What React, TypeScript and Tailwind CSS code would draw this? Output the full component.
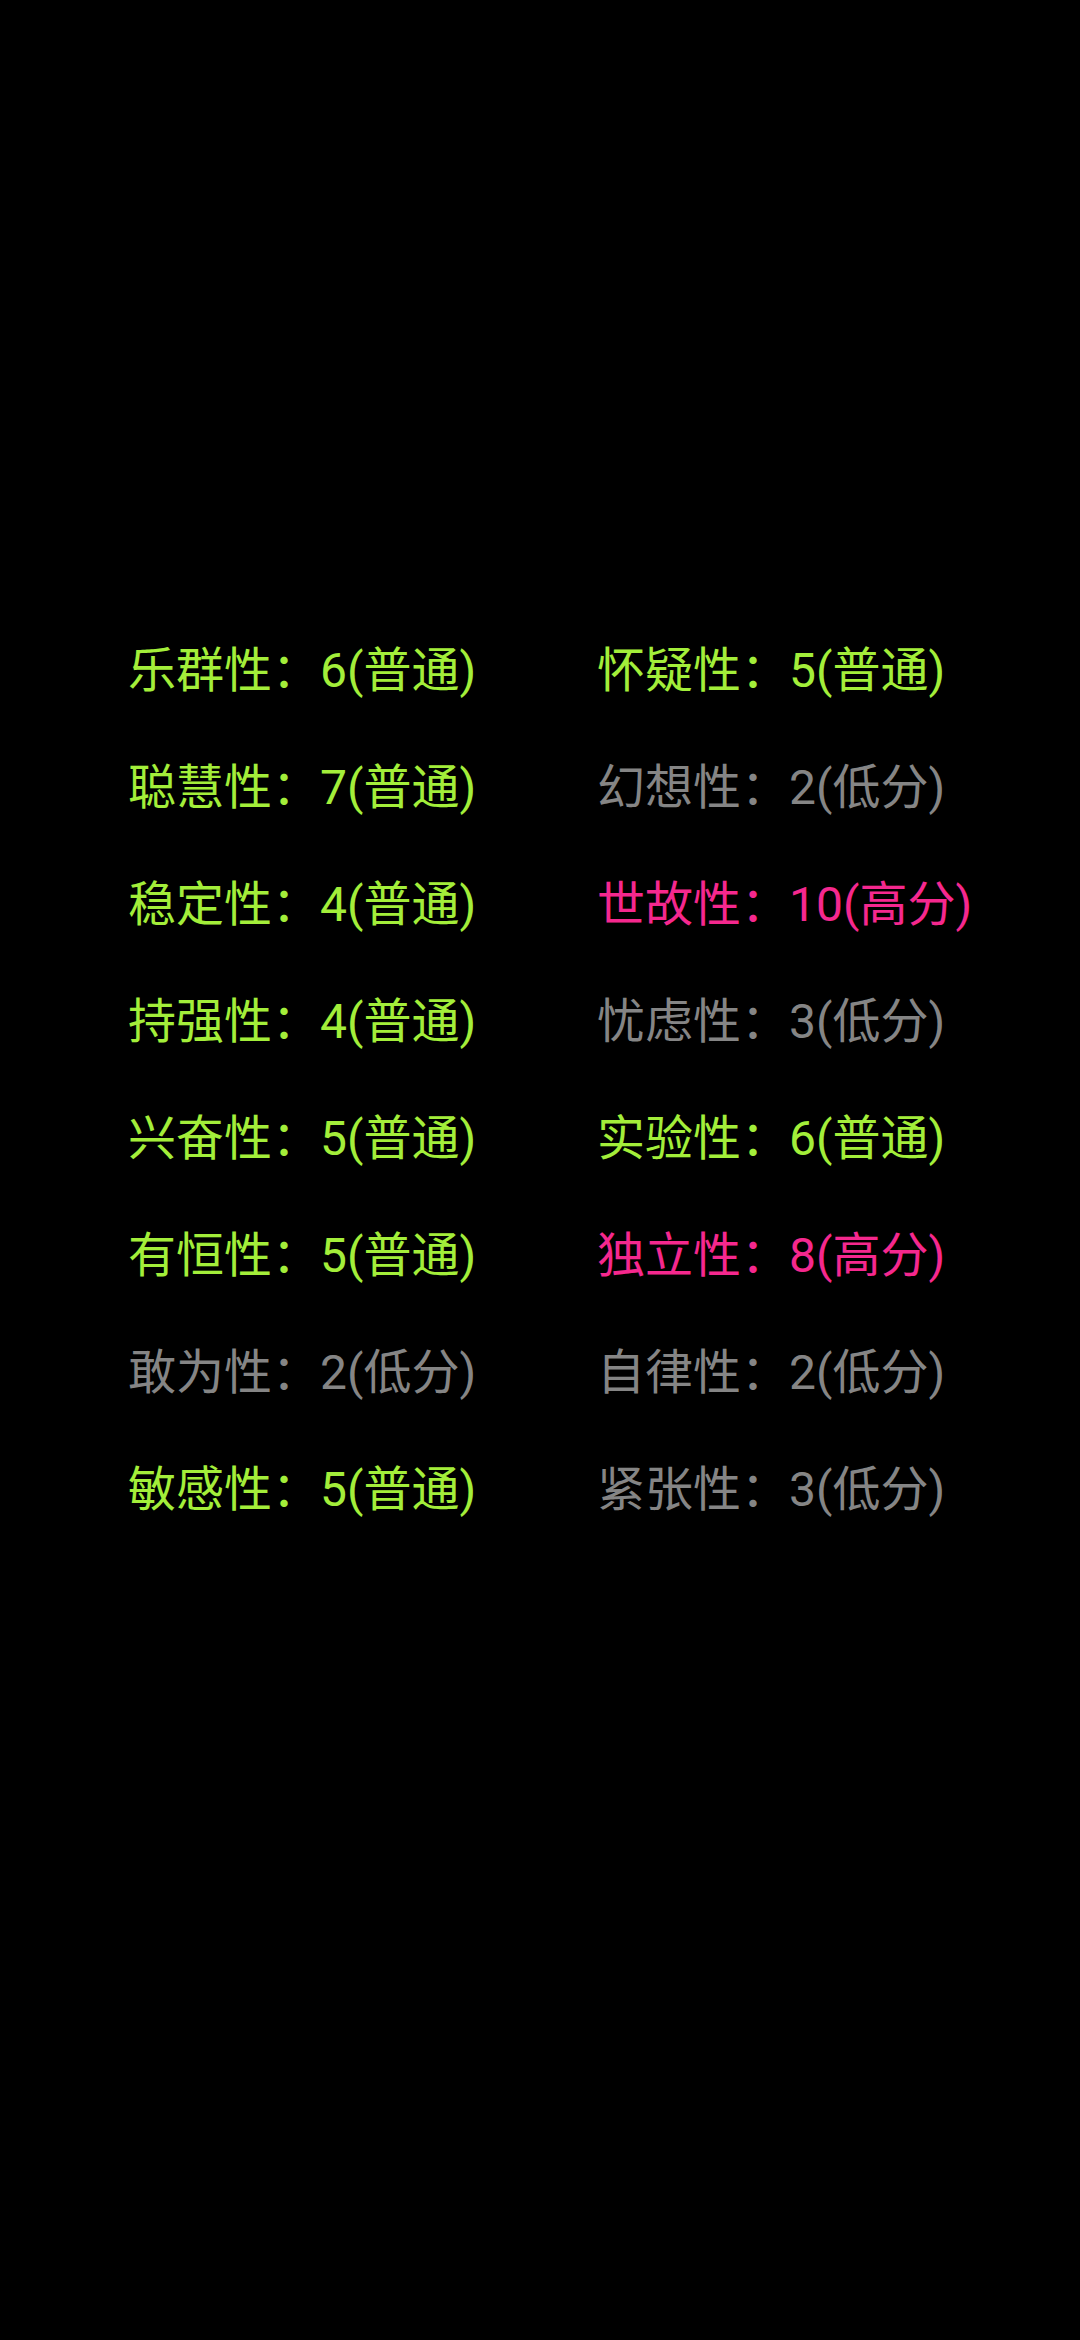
import React from "react";

type Item = { label: string; value: string; level: "n" | "h" | "l" };

const left: Item[] = [
  { label: "乐群性", value: "6(普通)", level: "n" },
  { label: "聪慧性", value: "7(普通)", level: "n" },
  { label: "稳定性", value: "4(普通)", level: "n" },
  { label: "持强性", value: "4(普通)", level: "n" },
  { label: "兴奋性", value: "5(普通)", level: "n" },
  { label: "有恒性", value: "5(普通)", level: "n" },
  { label: "敢为性", value: "2(低分)", level: "l" },
  { label: "敏感性", value: "5(普通)", level: "n" },
];

const right: Item[] = [
  { label: "怀疑性", value: "5(普通)", level: "n" },
  { label: "幻想性", value: "2(低分)", level: "l" },
  { label: "世故性", value: "10(高分)", level: "h" },
  { label: "忧虑性", value: "3(低分)", level: "l" },
  { label: "实验性", value: "6(普通)", level: "n" },
  { label: "独立性", value: "8(高分)", level: "h" },
  { label: "自律性", value: "2(低分)", level: "l" },
  { label: "紧张性", value: "3(低分)", level: "l" },
];

function Cell({ item }: { item: Item }) {
  const color =
    item.level === "n"
      ? "text-[#a3ee3a]"
      : item.level === "h"
      ? "text-[#f5288e]"
      : "text-[#858585]";
  return (
    <div className={`h-[117px] flex items-center whitespace-nowrap ${color}`}>
      {item.label}：{item.value}
    </div>
  );
}

export default function App() {
  const rows = left.map((l, i) => [l, right[i]] as const);
  return (
    <div
      lang="zh-CN"
      className="w-[1080px] h-[2340px] bg-black pt-[612px] pl-[128px] text-[48px] leading-none"
      style={{ fontFamily: '"Roboto", "Noto Sans CJK SC", sans-serif' }}
    >
      <div className="grid grid-cols-[469px_auto]">
        {rows.map(([a, b], i) => (
          <React.Fragment key={i}>
            <Cell item={a} />
            <Cell item={b} />
          </React.Fragment>
        ))}
      </div>
    </div>
  );
}
